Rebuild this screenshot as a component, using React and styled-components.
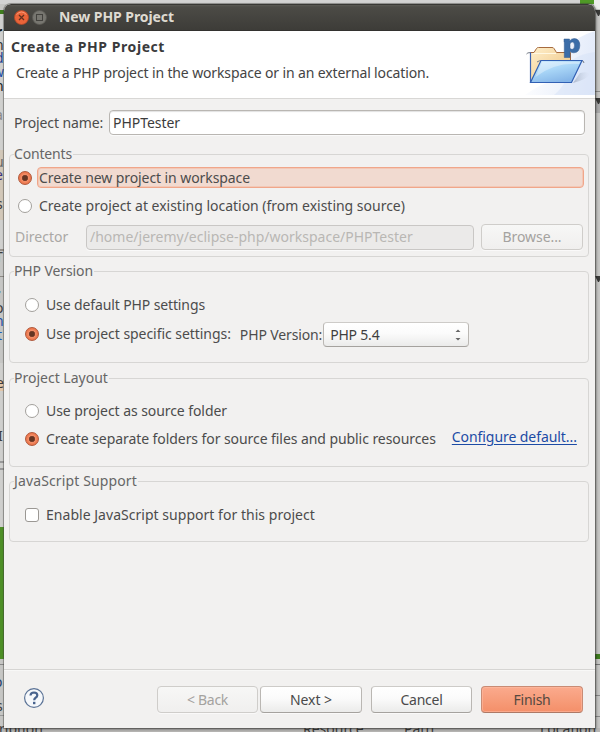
import React from 'react';
import styled, { createGlobalStyle, css } from 'styled-components';

const GlobalStyle = createGlobalStyle`
  *, *::before, *::after { box-sizing: border-box; }
  body { margin: 0; background: #c4c4c2; }
`;

const Desktop = styled.div`
  position: relative;
  width: 600px;
  height: 732px;
  padding: 4px 5px 4px 4px;
  overflow: hidden;
  background: #c6c6c4;
  font-family: "Noto Sans", "Open Sans", sans-serif;
  font-size: 14px;
  color: #4c4c4c;
`;

/* Window peeking out behind the dialog */
const Sliver = styled.div`
  position: absolute;
  left: ${(p) => p.$x}px;
  top: ${(p) => p.$y}px;
  width: ${(p) => p.$w}px;
  height: ${(p) => p.$h}px;
  background: ${(p) => p.$color};
`;

const Peek = styled.span`
  position: absolute;
  left: ${(p) => p.$x}px;
  top: ${(p) => p.$y + 3}px;
  line-height: 12px;
  white-space: pre;
  font-weight: ${(p) => (p.$bold ? 700 : 400)};
  color: ${(p) => p.$color || '#3c3c3c'};
`;

const Notch = styled.svg`
  position: absolute;
  left: 595px;
  top: ${(p) => p.$y}px;
  width: 7px;
  height: 6px;
`;

const Dialog = styled.div`
  position: relative;
  display: flex;
  flex-direction: column;
  width: 591px;
  height: 724px;
  background: #f2f1f0;
  border-radius: 7px 7px 0 0;
  box-shadow: 0 0 0 1px rgba(70, 70, 66, 0.4), 1px 1px 3px rgba(0, 0, 0, 0.55);
  overflow: hidden;
`;

const TitleBar = styled.div`
  display: flex;
  align-items: center;
  flex: none;
  height: 27px;
  padding-left: 10px;
  background: linear-gradient(#5a5953 0, #4c4b46 2px, #3d3c38 100%);
  border-top: 1px solid #393835;
  border-bottom: 1px solid #33322f;
  border-radius: 7px 7px 0 0;
`;

const WindowButton = styled.svg`
  display: block;
  width: 15px;
  height: 15px;
  margin-right: 3px;
`;

const Text = styled.span`
  line-height: 18px;
  white-space: pre;
  letter-spacing: ${(p) => p.$ls || 0}px;
`;

const WindowTitle = styled(Text)`
  margin: -1px 0 0 9px;
  font-weight: 700;
  color: #dfdbd2;
`;

const Header = styled.div`
  display: flex;
  justify-content: space-between;
  flex: none;
  height: 68px;
  background: #fff;
  border-bottom: 1px solid #d8d7d5;
`;

const HeaderText = styled.div`
  display: flex;
  flex-direction: column;
  gap: 8px;
  padding: 7px 0 0 7px;
`;

const Heading = styled(Text)`
  font-weight: 700;
  color: #3a3a3c;
`;

const Description = styled(Text)`
  padding-left: 5px;
  color: #444;
`;

const BannerArt = styled.svg`
  display: block;
  width: 76px;
  height: 64px;
`;

const Body = styled.div`
  flex: 1;
  padding: 11px 6px 0 5px;
`;

const NameRow = styled.label`
  display: flex;
  align-items: center;
  justify-content: space-between;
  height: 25px;
  padding: 0 4px 0 5px;
  margin-bottom: 10px;
`;

const Field = styled.div`
  display: flex;
  align-items: center;
  flex: none;
  width: ${(p) => p.$w}px;
  height: 25px;
  padding-left: 3px;
  border: 1px solid #b9b6b2;
  border-radius: 4px;
  background: #fff;
  color: #3c3c3c;
  box-shadow: inset 0 1px 1px rgba(0, 0, 0, 0.12), 0 1px 0 #fafafa;
  ${(p) => p.$disabled && css`
    border-color: #c9c7c5;
    background: #ebeae9;
    color: #b9b7b4;
    box-shadow: 0 1px 0 #fafafa;
  `}
`;

const Group = styled.fieldset`
  min-width: 0;
  height: ${(p) => p.$h}px;
  margin: 0 0 ${(p) => p.$gap || 0}px;
  padding: ${(p) => p.$top}px 4px 0 ${(p) => p.$left}px;
  border: 1px solid #d7d6d4;
  border-radius: 4px;
`;

const Legend = styled.legend`
  height: 18px;
  margin-left: ${(p) => p.$shift}px;
  padding: 0 1px 0 0;
  line-height: 18px;
  white-space: pre;
  letter-spacing: ${(p) => p.$ls || 0}px;
  color: #666;
`;

const Option = styled.label`
  display: flex;
  align-items: center;
  gap: 5px;
  height: ${(p) => p.$h || 22}px;
  margin-top: ${(p) => p.$mt || 0}px;
`;

const OptionText = styled(Text)`
  flex: ${(p) => (p.$focused ? 1 : 'none')};
  padding: 0 1px;
  border: 1px solid transparent;
  border-radius: 4px;
  ${(p) => p.$focused && css`
    height: 21px;
    margin-top: -1px;
    line-height: 19px;
    border-color: #f0a68a;
    background: #f1dad0;
    box-shadow: inset 0 0 0 1px #f3c8b6;
  `}
`;

const RadioMark = styled.span`
  display: grid;
  place-items: center;
  flex: none;
  width: 14px;
  height: 14px;
  border: 1px solid #a3a09c;
  border-radius: 50%;
  background: #fff;
  ${(p) => p.$on && css`
    border-color: #b0593c;
    background: radial-gradient(circle, #643523 0 2.3px, #9c5037 3px, #f28e68 3.5px, #ec7348 6px);
  `}
`;

const CheckMark = styled.span`
  flex: none;
  width: 14px;
  height: 14px;
  border: 1px solid #9b9894;
  border-radius: 3px;
  background: #fff;
`;

const DirectoryRow = styled.div`
  display: flex;
  align-items: center;
  height: 26px;
  margin: 7px 0 0 -3px;
  color: #aaa8a5;
`;

const DirectoryLabel = styled(Text)`
  flex: none;
  width: 71px;
`;

const Button = styled.button`
  flex: none;
  width: ${(p) => p.$w || 102}px;
  height: ${(p) => p.$h || 27}px;
  padding: 0;
  border: 1px solid #bab7b3;
  border-top-color: #cdcbc8;
  border-bottom-color: #a5a29e;
  border-radius: 4px;
  background: linear-gradient(#fff, #fbfbfb 45%, #ebebea);
  box-shadow: 0 1px 0 rgba(255, 255, 255, 0.6);
  font: inherit;
  line-height: 18px;
  letter-spacing: ${(p) => p.$ls || 0}px;
  color: #4a4a4a;
  ${(p) => p.$kind === 'disabled' && css`
    border-color: #cfcdca;
    background: linear-gradient(#f7f7f6, #f0efee);
    color: #a4a29f;
  `}
  ${(p) => p.$kind === 'primary' && css`
    border-color: #c98b74;
    border-bottom-color: #ad7966;
    background: linear-gradient(#fbaa8d, #f79d7b 50%, #f48f69);
    box-shadow: inset 0 0 0 1px rgba(255, 190, 165, 0.55);
    color: #554840;
  `}
`;

const VersionLabel = styled(Text)`
  margin-left: 2px;
  padding-top: 2px;
`;

const Select = styled.div`
  display: flex;
  align-items: center;
  justify-content: space-between;
  width: 146px;
  height: 25px;
  margin: 2px 0 0 -4px;
  padding: 0 6px 0 6px;
  border: 1px solid #bab7b3;
  border-top-color: #cdcbc8;
  border-bottom-color: #a5a29e;
  border-radius: 4px;
  background: linear-gradient(#fff, #fbfbfb 45%, #ebebea);
  color: #3f3f3f;
`;

const Arrows = styled.svg`
  display: block;
  width: 8px;
  height: 14px;
`;

const Link = styled(Text)`
  margin: -5px 0 0 9px;
  color: #1c4ba5;
  text-decoration: underline;
  text-underline-offset: 2px;
  text-decoration-thickness: 1px;
`;

const Footer = styled.div`
  display: flex;
  align-items: center;
  flex: none;
  height: 59px;
  padding: 1px 12px 0 19px;
  border-top: 1px solid #d6d5d3;
  box-shadow: inset 0 1px 0 #f8f8f7;
`;

const HelpIcon = styled.svg`
  display: block;
  width: 22px;
  height: 22px;
  margin-top: -3px;
`;

const ButtonPair = styled.div`
  display: flex;
  gap: ${(p) => p.$gap}px;
  margin-left: ${(p) => p.$ml}px;
`;

const slivers = [
  [0, 0, 580, 4, '#d3d3d3'], [0, 10, 4, 4, '#3f7d1e'], [580, 0, 14, 4, '#4f9a26'], [594, 0, 6, 9, '#ededeb'],
  [0, 14, 4, 236, '#d0d0ce'], [0, 150, 4, 70, '#d2c7b8'],
  [0, 249, 4, 2, '#96908a'], [0, 276, 4, 1, '#8d8985'], [0, 363, 4, 164, '#cfcfcd'],
  [0, 380, 4, 11, '#e2c6a9'], [0, 461, 4, 2, '#999'], [0, 468, 4, 2, '#999'],
  [0, 527, 4, 132, '#4d8f26'], [0, 664, 4, 1, '#888'], [0, 715, 4, 1, '#999'],
  [595, 91, 5, 1, '#8b8b89'], [595, 98, 5, 15, '#aaa'], [595, 654, 5, 5, '#3f7d1e'], [595, 664, 5, 1, '#777'],
  [595, 695, 5, 1, '#888'], [595, 716, 5, 1, '#888'], [0, 728, 600, 4, '#b8b7b5'],
];

const peeks = [
  [-4, 23, 'r', '#111', 1], [-5, 36, 'n', '#333'], [-5, 49, 'd', '#1e3f8f'], [-7, 63, 'w', '#1e4fa8'], [-5, 77, 'n', '#222'],
  [-5, 106, 'a', '#888'], [-5, 153, 'u', '#666'], [-5, 166, 'e', '#3a3380'], [-4, 195, 's'], [-5, 248, 'T'],
  [-6, 285, 'r', '#000', 1], [-5, 299, 'o'], [-5, 312, 'n', '#1e4fa8'], [-3, 326, 't', '#1e5fc0'], [-4, 374, 'e'],
  [-2, 427, 'I'], [-6, 673, 'o', '#24426e'], [-4, 697, 's'],
  [-1, 720, 'ription'], [303, 720, 'Resource'], [404, 720, 'Path'], [540, 720, 'Location'],
];

const Radio = ({ on, focused, ls, h, mt, children, extra }) => (
  <Option $h={h} $mt={mt}>
    <RadioMark $on={on} />
    <OptionText $focused={focused} $ls={ls}>{children}</OptionText>
    {extra}
  </Option>
);

const FolderBanner = () => (
  <BannerArt viewBox="519 31 76 64">
    <defs>
      <linearGradient id="sky" x1="0" x2="1" y1="0.4" y2="0.6">
        <stop offset="0" stopColor="#fff" />
        <stop offset="1" stopColor="#dbe5f8" />
      </linearGradient>
      <linearGradient id="back" x1="0" x2="1" y1="0" y2="1">
        <stop offset="0" stopColor="#fff0cc" />
        <stop offset="1" stopColor="#ebbf7c" />
      </linearGradient>
      <linearGradient id="front" x1="0" x2="0.5" y1="0" y2="1">
        <stop offset="0" stopColor="#d4edfd" />
        <stop offset="0.5" stopColor="#a9d6f7" />
        <stop offset="1" stopColor="#86b6e8" />
      </linearGradient>
      <linearGradient id="shade" x1="0" x2="1" y1="0" y2="0">
        <stop offset="0" stopColor="#9eaabe" stopOpacity="0.8" />
        <stop offset="1" stopColor="#ccd6e8" stopOpacity="0" />
      </linearGradient>
    </defs>
    <path d="M525 95Q540 84 555 80Q557 42 595 31V95Z" fill="url(#sky)" opacity="0.8" />
    <path d="M572 60Q580 54 595 52V95H554Q568 84 572 60Z" fill="#d3dff6" opacity="0.45" />
    <path d="M580 73Q588 71 590 74Q588 79 573 83Z" fill="url(#shade)" />
    <path d="M526.500 54Q527 52.500 531 52.500" fill="none" stroke="#777d88" strokeWidth="1" />
    <path d="M530.500 82V52.500H534L536.500 48.500Q537 47.500 538.500 47.500H552Q553.500 47.500 554 48.500L556.500 52.500H570.500V62Z" fill="url(#back)" stroke="#a66a3e" strokeWidth="1" />
    <path d="M530.500 52.500V82.500" stroke="#3c63b3" strokeWidth="1.200" />
    <path d="M533 53.500H556" stroke="#fff8e2" strokeWidth="1" />
    <path d="M537 62Q539 60.500 542 60.500H580Q584 60 584 63" fill="none" stroke="#777d88" strokeWidth="1" />
    <path d="M541 60.500H582L571.500 82.500H530.500Z" fill="url(#front)" stroke="#3160b4" strokeWidth="1.200" />
    <path d="M542 62H580L579 64Q555 62 535.500 77Z" fill="#fff" opacity="0.35" />
    <path d="M564 39H569.500V41Q571.500 38.300 574.500 38.500Q579.800 39 579.800 45.300Q579.800 52.500 573.800 52.800Q571.500 52.800 570 51.300V57.500H564.300V42H564ZM570 44V48.300Q571 49.500 572.300 49.300Q574.600 49 574.500 45.200Q574.400 42 572.200 42Q570.700 42 570 44Z" fill="#3b6da8" stroke="#31598f" strokeWidth="0.500" fillRule="evenodd" />
  </BannerArt>
);

export default function App() {
  return (
    <Desktop>
      <GlobalStyle />
      {slivers.map(([x, y, w, h, c], i) => (
        <Sliver key={i} $x={x} $y={y} $w={w} $h={h} $color={c} />
      ))}
      {peeks.map(([x, y, t, c, b], i) => (
        <Peek key={i} $x={x} $y={y} $color={c} $bold={b}>{t}</Peek>
      ))}
      {[10, 98, 276].map((y) => (
        <Notch key={y} $y={y} viewBox="0 0 7 6"><path d="M0 0H7L4 6H3Z" fill="#3a3a38" /></Notch>
      ))}

      <Dialog>
        <TitleBar>
          <WindowButton viewBox="0 0 15 15">
            <circle cx="7.500" cy="7.500" r="7" fill="#ea6439" stroke="#b3492a" strokeWidth="0.800" />
            <path d="M2.500 4.500Q7.500 -0.500 12.500 4.500" stroke="#f79572" fill="none" />
            <path d="M5 5L10 10M10 5L5 10" stroke="#63311f" strokeWidth="1.300" />
          </WindowButton>
          <WindowButton viewBox="0 0 15 15">
            <circle cx="7.500" cy="7.500" r="7" fill="#777670" stroke="#5a5954" strokeWidth="0.800" />
            <rect x="4.500" y="4.500" width="6" height="6" fill="none" stroke="#43423e" />
          </WindowButton>
          <WindowTitle $ls={-0.07}>New PHP Project</WindowTitle>
        </TitleBar>

        <Header>
          <HeaderText>
            <Heading $ls={0.56}>Create a PHP Project</Heading>
            <Description $ls={-0.13}>Create a PHP project in the workspace or in an external location.</Description>
          </HeaderText>
          <FolderBanner />
        </Header>

        <Body>
          <NameRow>
            <Text $ls={-0.12}>Project name:</Text>
            <Field $w={476}><Text $ls={-0.05}>PHPTester</Text></Field>
          </NameRow>

          <Group $h={112} $gap={5} $top={4} $left={8}>
            <Legend $shift={-4} $ls={-0.17}>Contents</Legend>
            <Radio on focused ls={-0.08}>Create new project in workspace</Radio>
            <Radio mt={6} ls={-0.01}>Create project at existing location (from existing source)</Radio>
            <DirectoryRow>
              <DirectoryLabel>Director</DirectoryLabel>
              <Field $w={388} $disabled><Text>/home/jeremy/eclipse-php/workspace/PHPTester</Text></Field>
              <ButtonPair $gap={0} $ml={7}>
                <Button $h={26} $kind="disabled" $ls={-0.07}>Browse...</Button>
              </ButtonPair>
            </DirectoryRow>
          </Group>

          <Group $h={101} $gap={6} $top={14} $left={15}>
            <Legend $shift={-11} $ls={-0.11}>PHP Version</Legend>
            <Radio ls={-0.12}>Use default PHP settings</Radio>
            <Radio
              on
              h={25}
              mt={5}
              ls={-0.05}
              extra={(
                <>
                  <VersionLabel $ls={-0.14}>PHP Version:</VersionLabel>
                  <Select>
                    <Text $ls={-0.2}>PHP 5.4</Text>
                    <Arrows viewBox="0 0 8 14">
                      <path d="M1.500 4L4 1.500L6.500 4ZM1.500 10L4 12.500L6.500 10Z" fill="#666" />
                    </Arrows>
                  </Select>
                </>
              )}
            >
              Use project specific settings:
            </Radio>
          </Group>

          <Group $h={98} $gap={5} $top={13} $left={15}>
            <Legend $shift={-11}>Project Layout</Legend>
            <Radio ls={-0.07}>Use project as source folder</Radio>
            <Radio on mt={6} ls={-0.07} extra={<Link $ls={-0.07}>Configure default...</Link>}>
              Create separate folders for source files and public resources
            </Radio>
          </Group>

          <Group $h={70} $top={14} $left={15}>
            <Legend $shift={-11} $ls={0.13}>JavaScript Support</Legend>
            <Option>
              <CheckMark />
              <OptionText $ls={0.03}>Enable JavaScript support for this project</OptionText>
            </Option>
          </Group>
        </Body>

        <Footer>
          <HelpIcon viewBox="0 0 22 22">
            <circle cx="11" cy="11" r="9.400" fill="#f6f8fb" stroke="#5b7396" strokeWidth="1.200" />
            <path d="M7.500 8.500Q7.700 5.500 11 5.500Q14.300 5.600 14.300 8.200Q14.300 9.700 12.600 10.700Q11.200 11.500 11.200 13.200" fill="none" stroke="#48638e" strokeWidth="2.200" />
            <rect x="10" y="14.800" width="2.400" height="2.400" fill="#48638e" />
          </HelpIcon>
          <ButtonPair $gap={2} $ml={112}>
            <Button $w={101} $kind="disabled" $ls={-0.3}>{'< Back'}</Button>
            <Button $ls={-0.06}>{'Next >'}</Button>
          </ButtonPair>
          <ButtonPair $gap={9} $ml={9}>
            <Button $w={101} $ls={-0.26}>Cancel</Button>
            <Button $kind="primary" $ls={-0.25}>Finish</Button>
          </ButtonPair>
        </Footer>
      </Dialog>
    </Desktop>
  );
}
